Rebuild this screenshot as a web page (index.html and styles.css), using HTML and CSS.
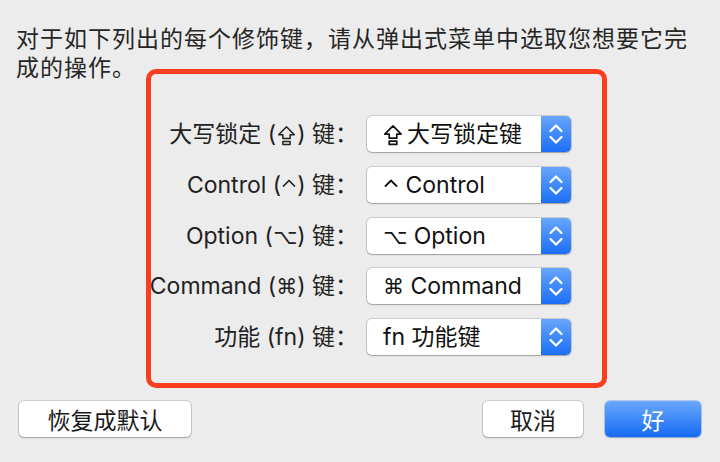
FILE: index.html
```html
<!DOCTYPE html>
<html lang="zh-CN">
<head>
<meta charset="utf-8">
<title>修饰键</title>
<link rel="stylesheet" href="styles.css">
</head>
<body>
<div class="dialog">
  <p class="intro">对于如下列出的每个修饰键，请从弹出式菜单中选取您想要它完成的操作。</p>
  <div class="form">
    <div class="highlight"></div>
    <div class="label">大写锁定 (<svg class="caps" viewBox="0 0 20 22" width="19" height="21"><path d="M10 1.8 L18.2 10.2 H13.8 V14.2 H6.2 V10.2 H1.8 Z M6.2 17.2 H13.8 V20.4 H6.2 Z" fill="none" stroke="currentColor" stroke-width="1.6" stroke-linejoin="round"/></svg>) 键：</div>
    <div class="popup"><span class="value"><svg class="caps" viewBox="0 0 20 22" width="20" height="22"><path d="M10 1.8 L18.2 10.2 H13.8 V14.2 H6.2 V10.2 H1.8 Z M6.2 17.2 H13.8 V20.4 H6.2 Z" fill="none" stroke="currentColor" stroke-width="1.7" stroke-linejoin="round"/></svg>大写锁定键</span><span class="stepper"><svg viewBox="0 0 30 36" width="30" height="36"><path d="M9.5 15 L15 9.5 L20.5 15 M9.5 21 L15 26.5 L20.5 21" fill="none" stroke="#fff" stroke-width="2.2" stroke-linecap="round" stroke-linejoin="round"/></svg></span></div>
    <div class="label">Control (<svg class="caret" viewBox="0 0 16 20" width="16" height="20"><path d="M2.5 11 L8 5.5 L13.5 11" fill="none" stroke="currentColor" stroke-width="1.7" stroke-linecap="round" stroke-linejoin="round"/></svg>) 键：</div>
    <div class="popup"><span class="value"><svg class="caret" viewBox="0 0 16 20" width="16" height="20"><path d="M2.5 11 L8 5.5 L13.5 11" fill="none" stroke="currentColor" stroke-width="1.8" stroke-linecap="round" stroke-linejoin="round"/></svg> Control</span><span class="stepper"><svg viewBox="0 0 30 36" width="30" height="36"><path d="M9.5 15 L15 9.5 L20.5 15 M9.5 21 L15 26.5 L20.5 21" fill="none" stroke="#fff" stroke-width="2.2" stroke-linecap="round" stroke-linejoin="round"/></svg></span></div>
    <div class="label">Option (<span class="sym">⌥</span>) 键：</div>
    <div class="popup"><span class="value"><span class="sym">⌥</span> Option</span><span class="stepper"><svg viewBox="0 0 30 36" width="30" height="36"><path d="M9.5 15 L15 9.5 L20.5 15 M9.5 21 L15 26.5 L20.5 21" fill="none" stroke="#fff" stroke-width="2.2" stroke-linecap="round" stroke-linejoin="round"/></svg></span></div>
    <div class="label">Command (<span class="sym">⌘</span>) 键：</div>
    <div class="popup"><span class="value"><span class="sym">⌘</span> Command</span><span class="stepper"><svg viewBox="0 0 30 36" width="30" height="36"><path d="M9.5 15 L15 9.5 L20.5 15 M9.5 21 L15 26.5 L20.5 21" fill="none" stroke="#fff" stroke-width="2.2" stroke-linecap="round" stroke-linejoin="round"/></svg></span></div>
    <div class="label">功能 (fn) 键：</div>
    <div class="popup"><span class="value">fn 功能键</span><span class="stepper"><svg viewBox="0 0 30 36" width="30" height="36"><path d="M9.5 15 L15 9.5 L20.5 15 M9.5 21 L15 26.5 L20.5 21" fill="none" stroke="#fff" stroke-width="2.2" stroke-linecap="round" stroke-linejoin="round"/></svg></span></div>
  </div>
  <div class="buttons">
    <button class="btn restore">恢复成默认</button>
    <span class="spacer"></span>
    <button class="btn cancel">取消</button>
    <button class="btn primary">好</button>
  </div>
</div>
</body>
</html>
```
FILE: styles.css
```css
html, body {
  margin: 0;
  padding: 0;
  background: #ececec;
}
body {
  width: 720px;
  height: 462px;
  overflow: hidden;
  font-family: Inter, "Noto Sans CJK SC", "DejaVu Sans", sans-serif;
  font-size: 23px;
  color: #222;
}
.dialog {
  display: flex;
  flex-direction: column;
}
.intro {
  margin: 0;
  padding: 25px 24px 0 16px;
  line-height: 29px;
  letter-spacing: 1px;
  color: #262626;
}
.form {
  position: relative;
  margin-top: 33px;
  display: grid;
  grid-template-columns: 358px 204px;
  column-gap: 9px;
  row-gap: 14.75px;
}
.highlight {
  position: absolute;
  left: 146px;
  top: -47px;
  bottom: -33px;
  width: 461px;
  box-sizing: border-box;
  border: 5px solid #fb3d1f;
  border-radius: 10px;
  pointer-events: none;
}
.label {
  height: 36px;
  line-height: 36px;
  text-align: right;
  white-space: nowrap;
  color: #222;
}
.sym {
  font-family: "DejaVu Sans", sans-serif;
  font-size: 21px;
  line-height: 0;
}
.caret {
  vertical-align: -2px;
}
.caps {
  vertical-align: -4px;
  margin: 0 1px;
}
.popup {
  display: flex;
  height: 36px;
  background: #fff;
  border-radius: 5px;
  box-shadow: 0 0 0 1px rgba(0,0,0,0.13), 0 1px 1.5px rgba(0,0,0,0.22);
}
.value {
  flex: 1;
  padding-left: 16px;
  line-height: 36px;
  color: #111;
  white-space: nowrap;
}
.value .caps {
  margin: 0 4px 0 0;
}
.stepper {
  width: 30px;
  height: 36px;
  border-radius: 0 5px 5px 0;
  background: linear-gradient(#67a6fb, #1b6ef6);
}
.stepper svg {
  display: block;
}
.buttons {
  display: flex;
  margin-top: 46px;
  padding: 0 19px;
  gap: 22px;
}
.spacer {
  flex: 1;
}
.btn {
  height: 36px;
  border: none;
  border-radius: 5px;
  font-family: inherit;
  font-size: 23px;
  padding: 0;
  color: #1a1a1a;
  background: #fff;
  box-shadow: 0 0 0 1px rgba(0,0,0,0.12), 0 1px 1.5px rgba(0,0,0,0.25);
}
.restore { width: 172px; }
.cancel { width: 100px; }
.primary {
  width: 96px;
  color: #fff;
  background: linear-gradient(#6aa8fa, #166bf6);
  box-shadow: 0 0 0 1px rgba(20,90,220,0.25), 0 1px 1.5px rgba(0,0,0,0.2);
}
```
